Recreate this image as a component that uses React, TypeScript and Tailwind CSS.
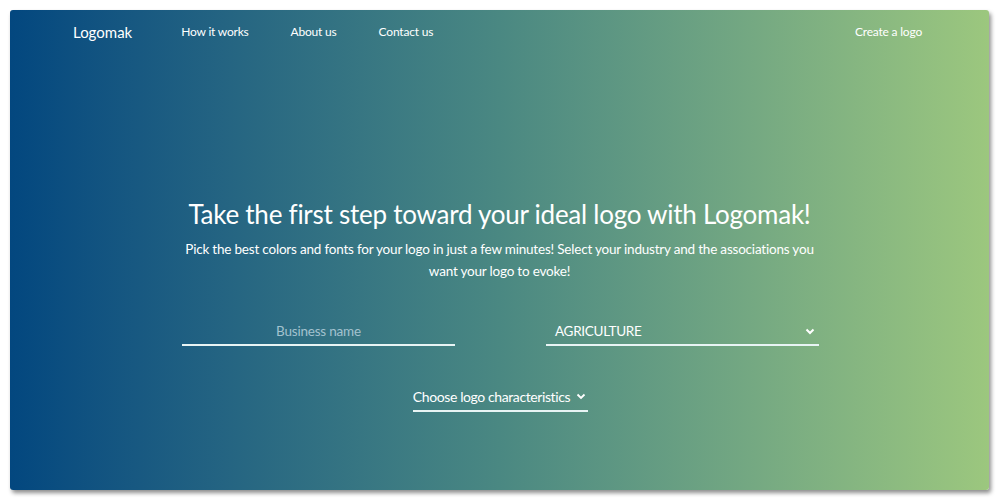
import React from "react";

export default function App() {
  return (
    <div className="w-[1000px] h-[500px] bg-white p-[10px] pr-[11px]" style={{ fontFamily: "Lato, 'Noto Sans', sans-serif" }}>
      <div className="w-full h-full rounded-[3px] bg-gradient-to-r from-[#03477f] via-[#4a8882] to-[#9cc77e] shadow-[2px_3px_4px_rgba(0,0,0,0.45)] flex flex-col text-white">
        <nav className="flex items-center h-[44px] pl-[63px] pr-[67px]">
          <span className="text-[15px] mr-[49px]">Logomak</span>
          <span className="text-[12px] tracking-[-0.2px] mr-[42px]">How it works</span>
          <span className="text-[12px] tracking-[-0.2px] mr-[42px]">About us</span>
          <span className="text-[12px] tracking-[-0.2px]">Contact us</span>
          <span className="text-[12px] tracking-[-0.2px] ml-auto">Create a logo</span>
        </nav>
        <div className="flex flex-col items-center pt-[143px]">
          <h1 className="text-[26px] leading-[34px] tracking-[-0.25px]">Take the first step toward your ideal logo with Logomak!</h1>
          <p className="text-[13.5px] leading-[22px] tracking-[-0.2px] text-center w-[640px] mt-[7px]">
            Pick the best colors and fonts for your logo in just a few minutes! Select your industry and the associations you want your logo to evoke!
          </p>
          <div className="flex gap-[91px] mt-[36px] w-[637px] ml-[2px]">
            <div className="w-[273px] border-b-2 border-[#e8f4f4] h-[28px] flex items-center justify-center">
              <span className="text-[13.5px] tracking-[-0.2px] text-[#a3c2cf]">Business name</span>
            </div>
            <div className="w-[273px] border-b-2 border-[#e8f4f4] h-[28px] flex items-center justify-between pl-[9px] pr-[4px]">
              <span className="text-[13.5px] tracking-[-0.3px]">AGRICULTURE</span>
              <svg width="10" height="7" viewBox="0 0 10 7" fill="none" stroke="white" strokeWidth="2">
                <path d="M1.5 1.5 L5 5 L8.5 1.5" />
              </svg>
            </div>
          </div>
          <div className="mt-[40px] ml-[2px] border-b-2 border-[#e8f4f4] flex items-center gap-[6px] pb-[3px] pr-[2px]">
            <span className="text-[14px] tracking-[-0.4px]">Choose logo characteristics</span>
            <svg width="10" height="7" viewBox="0 0 10 7" fill="none" stroke="white" strokeWidth="1.8">
              <path d="M1.5 1.5 L5 5 L8.5 1.5" />
            </svg>
          </div>
        </div>
      </div>
    </div>
  );
}
